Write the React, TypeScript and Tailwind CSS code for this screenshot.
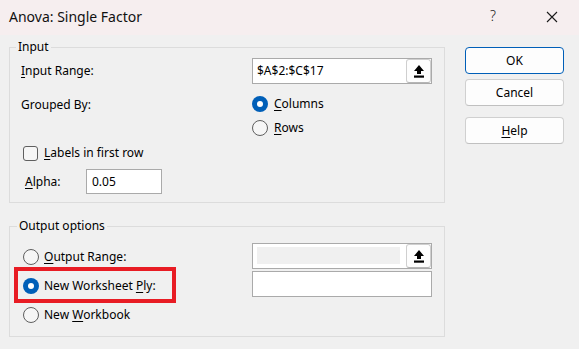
import React from "react";

const Radio = ({ checked }: { checked?: boolean }) =>
  checked ? (
    <span className="w-[16px] h-[16px] rounded-full bg-[#005fb8] flex items-center justify-center shrink-0">
      <span className="w-[6px] h-[6px] rounded-full bg-white" />
    </span>
  ) : (
    <span className="w-[16px] h-[16px] rounded-full border border-[#5f5f5f] bg-[#f6f6f6] shrink-0" />
  );

const UploadIcon = () => (
  <svg width="10" height="13" viewBox="0 0 10 13" fill="#000">
    <path d="M5 0 L10 6 L7 6 L7 9 L3 9 L3 6 L0 6 Z" />
    <rect x="0" y="10.5" width="10" height="2.2" />
  </svg>
);

const PickButton = () => (
  <div className="w-[25px] h-full bg-[#fdfdfd] border border-[#cfcfcf] border-b-[#b5b5b5] rounded-[3px] flex items-center justify-center">
    <UploadIcon />
  </div>
);

const Btn = ({ children, primary, className = "" }: { children: React.ReactNode; primary?: boolean; className?: string }) => (
  <div
    className={
      "h-[27px] w-[99px] rounded-[4px] bg-[#fdfdfd] flex items-center justify-center border " +
      (primary ? "border-[#005fb8]" : "border-[#d0d0d0] border-b-[#c0c0c0]") +
      " " +
      className
    }
  >
    {children}
  </div>
);

const U = ({ children }: { children: React.ReactNode }) => (
  <span className="underline underline-offset-[2px] decoration-[1px]">{children}</span>
);

export default function App() {
  return (
    <div className="w-[579px] h-[349px] bg-[#f0f0f0] flex flex-col font-['Noto_Sans',sans-serif] text-[12px] leading-[16px] text-black overflow-hidden">
      {/* Title bar */}
      <div className="h-[35px] bg-[#f6eeef] flex items-center shrink-0">
        <div className="pl-[9px] text-[14px] text-[#111] flex-1 pb-[1px]">Anova: Single Factor</div>
        <div className="w-[14px] text-[14px] text-[#222] mr-[42px] pb-[3px] font-light">?</div>
        <svg width="12" height="12" viewBox="0 0 12 12" className="mr-[21px] mb-[1px]">
          <path d="M1 1 L11 11 M11 1 L1 11" stroke="#1a1a1a" strokeWidth="1.1" />
        </svg>
      </div>

      {/* Body */}
      <div className="flex pl-[9px] pt-[12px]">
        <div className="w-[436px] flex flex-col">
          {/* Input group */}
          <div className="h-[156px] border border-[#dcdcdc] flex flex-col pl-[11px]">
            <span className="-mt-[9px] ml-[-5px] px-[2px] bg-[#f0f0f0] w-fit leading-[16px]">Input</span>
            <div className="mt-[3px] h-[26px] grid grid-cols-[231px_180px] items-center">
              <span>
                <U>I</U>nput Range:
              </span>
              <div className="h-[26px] w-[180px] bg-white border border-[#aaaaaa] flex items-center">
                <span className="pl-[4px] flex-1">$A$2:$C$17</span>
                <PickButton />
              </div>
            </div>
            <div className="mt-[8px] grid grid-cols-[231px_180px]">
              <span className="pt-[5px]">Grouped By:</span>
              <div className="flex flex-col">
                <div className="h-[24px] flex items-center gap-[6px]">
                  <Radio checked />
                  <span>
                    <U>C</U>olumns
                  </span>
                </div>
                <div className="h-[24px] flex items-center gap-[6px]">
                  <Radio />
                  <span>
                    <U>R</U>ows
                  </span>
                </div>
              </div>
            </div>
            <div className="mt-[5px] h-[16px] flex items-center ml-[2px] gap-[6px]">
              <span className="w-[15px] h-[15px] rounded-[3px] border border-[#5f5f5f] bg-[#f6f6f6]" />
              <span>
                <U>L</U>abels in first row
              </span>
            </div>
            <div className="mt-[8px] h-[25px] grid grid-cols-[61px_76px] items-center ml-[4px]">
              <span>
                <U>A</U>lpha:
              </span>
              <div className="h-[25px] bg-white border border-[#aaaaaa] flex items-center pl-[5px]">0.05</div>
            </div>
          </div>

          {/* Output group */}
          <div className="relative mt-[23px] h-[111px] border border-[#dcdcdc] flex flex-col pl-[11px]">
            <span className="-mt-[9px] ml-[-4px] px-[2px] bg-[#f0f0f0] w-fit leading-[16px]">Output options</span>
            <div className="mt-[8px] grid grid-cols-[231px_180px]">
              <div className="flex flex-col ml-[2px]">
                <div className="h-[29px] flex items-center gap-[5px]">
                  <Radio />
                  <span>
                    <U>O</U>utput Range:
                  </span>
                </div>
                <div className="h-[29px] flex items-center gap-[5px]">
                  <Radio checked />
                  <span>
                    New Worksheet <U>P</U>ly:
                  </span>
                </div>
                <div className="h-[29px] flex items-center gap-[5px]">
                  <Radio />
                  <span>
                    New <U>W</U>orkbook
                  </span>
                </div>
              </div>
              <div className="flex flex-col pt-[1px]">
                <div className="h-[26px] bg-white border border-[#aaaaaa] flex items-center">
                  <div className="flex-1 pl-[4px] pr-[6px] h-full py-[3px]">
                    <div className="h-[17px] bg-[#f0f0f0]" />
                  </div>
                  <PickButton />
                </div>
                <div className="mt-[2px] h-[26px] bg-white border border-[#aaaaaa]" />
              </div>
            </div>
            <div className="absolute left-[4px] top-[40px] w-[162px] h-[36px] border-[4px] border-[#e81c24]" />
          </div>
        </div>

        {/* Buttons */}
        <div className="ml-[20px] flex flex-col">
          <Btn primary>OK</Btn>
          <Btn className="mt-[5px]">Cancel</Btn>
          <Btn className="mt-[11px]">
            <span>
              <U>H</U>elp
            </span>
          </Btn>
        </div>
      </div>
    </div>
  );
}
